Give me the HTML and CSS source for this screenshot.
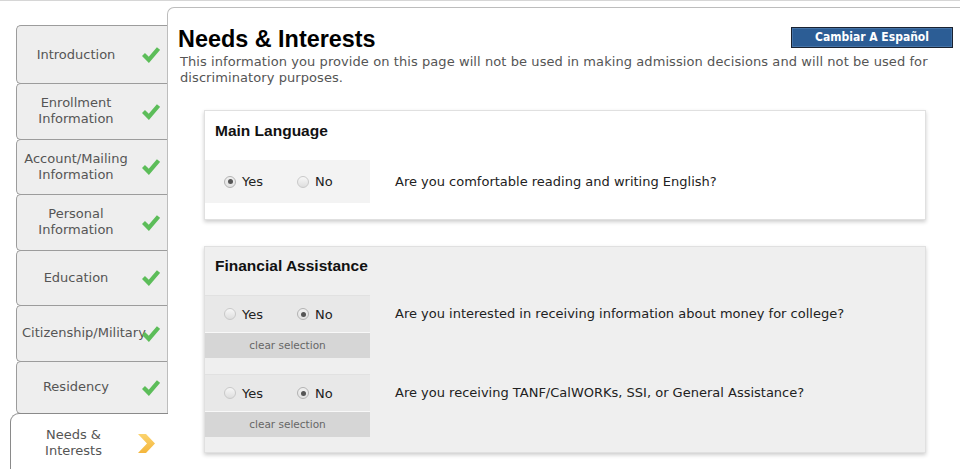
FILE: index.html
```html
<!DOCTYPE html>
<html lang="en">
<head>
<meta charset="utf-8">
<title>Needs &amp; Interests</title>
<link rel="stylesheet" href="styles.css">
</head>
<body>
<div class="page">
  <nav class="sidebar">
    <div class="tab tab-first">
      <span class="tab-label">Introduction</span>
      <svg class="check" viewBox="0 0 18 17"><path d="M1.5 8.5 L6.8 13.8 L16.5 2.5" /></svg>
    </div>
    <div class="tab">
      <span class="tab-label">Enrollment<br>Information</span>
      <svg class="check" viewBox="0 0 18 17"><path d="M1.5 8.5 L6.8 13.8 L16.5 2.5" /></svg>
    </div>
    <div class="tab">
      <span class="tab-label">Account/Mailing<br>Information</span>
      <svg class="check" viewBox="0 0 18 17"><path d="M1.5 8.5 L6.8 13.8 L16.5 2.5" /></svg>
    </div>
    <div class="tab">
      <span class="tab-label">Personal<br>Information</span>
      <svg class="check" viewBox="0 0 18 17"><path d="M1.5 8.5 L6.8 13.8 L16.5 2.5" /></svg>
    </div>
    <div class="tab">
      <span class="tab-label">Education</span>
      <svg class="check" viewBox="0 0 18 17"><path d="M1.5 8.5 L6.8 13.8 L16.5 2.5" /></svg>
    </div>
    <div class="tab">
      <span class="tab-label">Citizenship/Military</span>
      <svg class="check" viewBox="0 0 18 17"><path d="M1.5 8.5 L6.8 13.8 L16.5 2.5" /></svg>
    </div>
    <div class="tab tab-short">
      <span class="tab-label">Residency</span>
      <svg class="check" viewBox="0 0 18 17"><path d="M1.5 8.5 L6.8 13.8 L16.5 2.5" /></svg>
    </div>
    <div class="tab tab-active">
      <span class="tab-label">Needs &amp;<br>Interests</span>
      <svg class="chevron" viewBox="0 0 17 19">
        <defs>
          <linearGradient id="chev" x1="0" y1="0" x2="0" y2="1">
            <stop offset="0" stop-color="#fbd36e"/>
            <stop offset="1" stop-color="#f4b63c"/>
          </linearGradient>
        </defs>
        <polygon points="0,0 8,0 17,9.5 8,19 0,19 9,9.5" fill="url(#chev)"/>
      </svg>
    </div>
  </nav>

  <main class="content">
    <header class="header">
      <div class="title-row">
        <h1 class="title">Needs &amp; Interests</h1>
        <button class="lang-btn" type="button">Cambiar A Español</button>
      </div>
      <p class="intro">This information you provide on this page will not be used in making admission decisions and will not be used for discriminatory purposes.</p>
    </header>

    <div class="cards">
      <section class="card">
        <h2 class="card-title">Main Language</h2>
        <div class="q-row">
          <div class="choice">
            <div class="radios">
              <label class="opt"><span class="radio checked"></span>Yes</label>
              <label class="opt"><span class="radio"></span>No</label>
            </div>
          </div>
          <p class="q-text">Are you comfortable reading and writing English?</p>
        </div>
      </section>

      <section class="card card-gray">
        <h2 class="card-title">Financial Assistance</h2>
        <div class="q-row">
          <div class="choice">
            <div class="radios">
              <label class="opt"><span class="radio"></span>Yes</label>
              <label class="opt"><span class="radio checked"></span>No</label>
            </div>
            <div class="clear">clear selection</div>
          </div>
          <p class="q-text">Are you interested in receiving information about money for college?</p>
        </div>
        <div class="q-row">
          <div class="choice">
            <div class="radios">
              <label class="opt"><span class="radio"></span>Yes</label>
              <label class="opt"><span class="radio checked"></span>No</label>
            </div>
            <div class="clear">clear selection</div>
          </div>
          <p class="q-text">Are you receiving TANF/CalWORKs, SSI, or General Assistance?</p>
        </div>
      </section>
    </div>
  </main>
</div>
</body>
</html>
```

FILE: styles.css
```css
* { box-sizing: border-box; }

html, body {
  margin: 0;
  padding: 0;
  background: #fff;
}

body {
  font-family: "DejaVu Sans", Verdana, sans-serif;
  font-size: 13px;
  color: #222;
  overflow: hidden;
}

.page {
  display: flex;
  height: 469px;
  border-top: 1px solid #d6d6d6;
  overflow: hidden;
}

/* ---------- sidebar ---------- */
.sidebar {
  width: 167px;
  flex-shrink: 0;
  display: flex;
  flex-direction: column;
  padding-top: 24px;
}

.tab {
  display: flex;
  align-items: center;
  margin-left: 16px;
  height: 56.5px;
  margin-bottom: -1px;
  background: #eeeeee;
  border: 1px solid #9c9c9c;
  border-right: none;
  border-radius: 5px 0 0 5px;
  color: #555;
  font-size: 13px;
  line-height: 16px;
}

.tab-first { height: 59px; }
.tab-short { height: 53px; }

.tab-label {
  flex-shrink: 0;
  width: 108px;
  margin-left: 5px;
  text-align: center;
  white-space: nowrap;
}

.check {
  width: 18px;
  height: 17px;
  margin-left: 12px;
  flex-shrink: 0;
}

.check path {
  fill: none;
  stroke: #5cbd59;
  stroke-width: 4.2;
  stroke-linejoin: miter;
}

.tab-active {
  flex: 1;
  align-items: flex-start;
  padding-top: 13px;
  margin-left: 10px;
  margin-right: -1px;
  margin-bottom: 0;
  background: #fff;
  border-color: #8a8a8a;
  border-bottom: none;
  border-radius: 9px 0 0 0;
  position: relative;
  z-index: 1;
}

.tab-active .tab-label {
  width: 115px;
}

.chevron {
  width: 17px;
  height: 19px;
  margin-left: 7px;
  margin-top: 7px;
  flex-shrink: 0;
}

/* ---------- main ---------- */
.content {
  flex: 1;
  margin-top: 6px;
  background: #fff;
  border-top: 1px solid #bdbdbd;
  border-left: 1px solid #bdbdbd;
  border-top-left-radius: 7px;
}

.header {
  padding: 17px 7px 0 10px;
}

.title-row {
  display: flex;
  justify-content: space-between;
  align-items: flex-start;
}

.title {
  margin: 0;
  font-family: "Liberation Sans", Arial, sans-serif;
  font-weight: bold;
  font-size: 23.4px;
  line-height: 28px;
  color: #000;
}

.lang-btn {
  margin-top: 2px;
  width: 162px;
  height: 21px;
  padding: 0;
  background: #2c5d95;
  border: 1px solid #1a2230;
  box-shadow: inset 0 0 0 1px #4674a8;
  color: #fff;
  font-family: "DejaVu Sans Condensed", "DejaVu Sans", sans-serif;
  font-stretch: condensed;
  font-weight: bold;
  font-size: 12px;
  line-height: 19px;
}

.intro {
  margin: 1px 0 0 2px;
  font-size: 13px;
  line-height: 16px;
  letter-spacing: 0.08px;
  color: #555;
}

/* ---------- cards ---------- */
.cards {
  padding: 24px 34px 0 36px;
}

.card {
  background: #fff;
  border: 1px solid #e0e0e0;
  box-shadow: 0 2px 4px rgba(0, 0, 0, 0.2);
  padding: 11px 0 16px 0;
  margin-bottom: 26px;
}

.card-gray {
  background: #efefef;
  padding-top: 10px;
  padding-bottom: 15px;
}

.card-title {
  margin: 0 0 20px 10px;
  font-family: "Liberation Sans", Arial, sans-serif;
  font-weight: bold;
  font-size: 15.5px;
  line-height: 18px;
  color: #111;
}

.q-row {
  display: flex;
  align-items: flex-start;
}

.q-row + .q-row {
  margin-top: 16px;
}

.choice {
  width: 165px;
  flex-shrink: 0;
  background: #f3f3f3;
}

.radios {
  display: flex;
  align-items: center;
  height: 43px;
  padding-left: 19px;
}

.card-gray .choice {
  background: #e8e8e8;
  border-top: 1px solid #e1e1e1;
}

.card-gray .radios {
  height: 36px;
}

.opt {
  display: flex;
  align-items: center;
  gap: 6px;
  width: 73px;
  font-size: 13px;
  color: #222;
}

.radio {
  display: grid;
  place-items: center;
  width: 12px;
  height: 12px;
  border-radius: 50%;
  border: 1px solid #c9c9c9;
  background: linear-gradient(#f7f7f7, #dedede);
}

.radio.checked {
  border-color: #b3b3b3;
  background: linear-gradient(#f0f0f0, #e2e2e2);
}

.radio.checked::after {
  content: "";
  width: 5px;
  height: 5px;
  border-radius: 50%;
  background: #555;
}

.clear {
  height: 26px;
  border-top: 1px solid #f8f8f8;
  background: #d6d6d6;
  color: #666;
  font-size: 10.5px;
  line-height: 25px;
  text-align: center;
}

.q-text {
  margin: 0 0 0 25px;
  font-size: 13px;
  line-height: 43px;
  color: #222;
}

.card-gray .q-text {
  line-height: 37px;
}
```
